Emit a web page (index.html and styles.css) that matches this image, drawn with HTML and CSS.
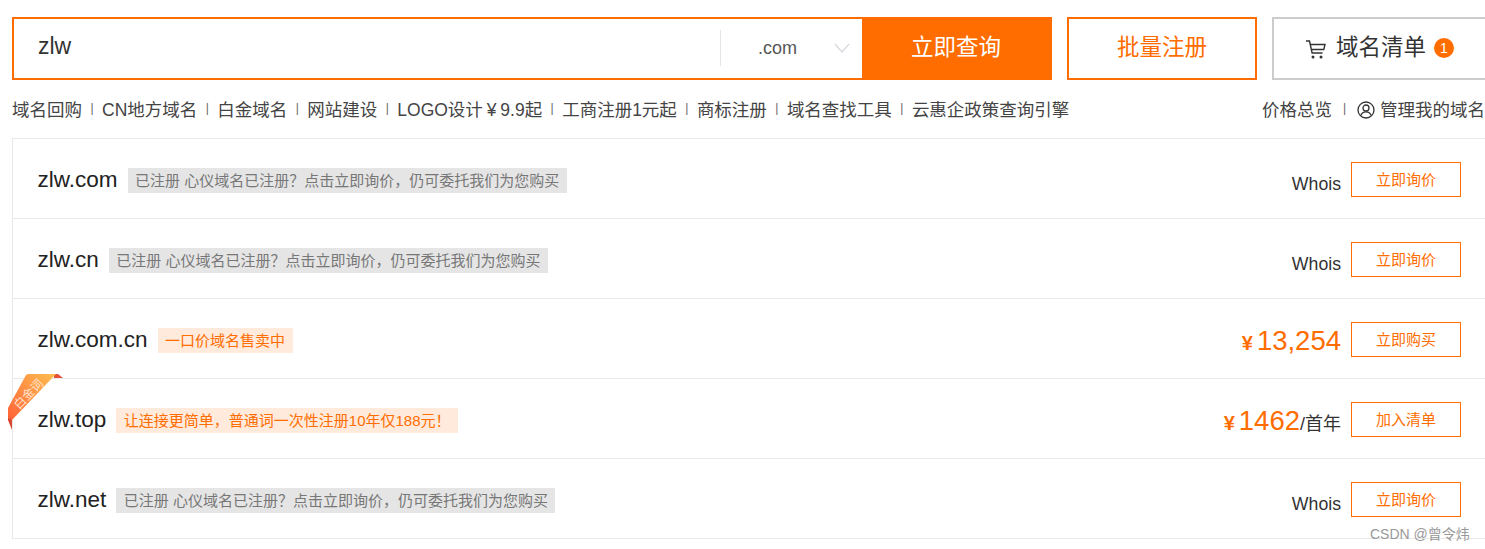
FILE: index.html
```html
<!DOCTYPE html>
<html lang="zh-CN">
<head>
    <meta charset="UTF-8">
    <meta name="viewport" content="width=device-width, initial-scale=1.0">
    <title>域名查询</title>
    <link rel="stylesheet" href="styles.css">
</head>
<body>
    <div class="top-bar">
        <form class="search-box">
            <div class="search-text">zlw</div>
            <div class="suffix">
                <span>.com</span>
                <svg class="suffix-arrow" width="16" height="10" viewBox="0 0 16 10"><path d="M1 1l7 8 7-8" fill="none" stroke="#d5d9de" stroke-width="1.2"/></svg>
            </div>
            <button type="button" class="search-btn">立即查询</button>
        </form>
        <a class="batch-btn">批量注册</a>
        <a class="cart-btn">
            <svg width="22" height="20" viewBox="0 0 22 20"><path d="M1 2h3.500l2.600 12h10.400M5.200 5.500h14.800l-1.200 5H6.300" fill="none" stroke="#333" stroke-width="1.400"/><circle cx="8" cy="18" r="1.500" fill="#333"/><circle cx="16" cy="18" r="1.500" fill="#333"/></svg>
            <span>域名清单</span>
            <i class="cart-count">1</i>
        </a>
    </div>
    <div class="nav">
        <div class="nav-left">
            <a>域名回购</a><i>|</i>
            <a>CN地方域名</a><i>|</i>
            <a>白金域名</a><i>|</i>
            <a>网站建设</a><i>|</i>
            <a class="nav-logo">LOGO设计 ¥ 9.9起</a><i>|</i>
            <a>工商注册1元起</a><i>|</i>
            <a>商标注册</a><i>|</i>
            <a>域名查找工具</a><i>|</i>
            <a>云惠企政策查询引擎</a>
        </div>
        <div class="nav-right">
            <a>价格总览</a><i>|</i>
            <a class="my-domain">
                <svg class="user-icon" width="18" height="18" viewBox="0 0 18 18"><circle cx="9" cy="9" r="8" fill="none" stroke="#333" stroke-width="1.300"/><circle cx="9" cy="7" r="3" fill="none" stroke="#333" stroke-width="1.300"/><path d="M3.800 14.500c1-2.600 2.800-3.600 5.200-3.600s4.200 1 5.200 3.600" fill="none" stroke="#333" stroke-width="1.300"/></svg>
                管理我的域名
            </a>
        </div>
    </div>
    <div class="result-list">
        <div class="row">
            <div class="domain">zlw.com</div>
            <span class="tag">已注册 心仪域名已注册&#xFF1F;点击立即询价&#xFF0C;仍可委托我们为您购买</span>
            <div class="row-right">
                <a class="whois">Whois</a>
                <a class="row-btn">立即询价</a>
            </div>
        </div>
        <div class="row">
            <div class="domain">zlw.cn</div>
            <span class="tag">已注册 心仪域名已注册&#xFF1F;点击立即询价&#xFF0C;仍可委托我们为您购买</span>
            <div class="row-right">
                <a class="whois">Whois</a>
                <a class="row-btn">立即询价</a>
            </div>
        </div>
        <div class="row">
            <div class="domain">zlw.com.cn</div>
            <span class="tag tag-orange">一口价域名售卖中</span>
            <div class="row-right">
                <div class="price"><small>¥</small>13,254</div>
                <a class="row-btn">立即购买</a>
            </div>
        </div>
        <div class="row">
            <svg class="ribbon" width="56" height="58" viewBox="0 0 56 58">
                <defs>
                    <linearGradient id="ribbonFill" x1="1" y1="0" x2="0" y2="1">
                        <stop offset="0" stop-color="#ffbe50"/>
                        <stop offset="1" stop-color="#ff6238"/>
                    </linearGradient>
                </defs>
                <path d="M46 0h4l5 4h-9z" fill="#e8503a"/>
                <path d="M0 34v12l4 10v-10z" fill="#d9452f"/>
                <path d="M18 1q1-1 3-1h27L4 46 0 44v-10z" fill="url(#ribbonFill)"/>
                <text class="ribbon-text" transform="translate(11 36) rotate(-46)">白金词</text>
            </svg>
            <div class="domain">zlw.top</div>
            <span class="tag tag-orange">让连接更简单&#xFF0C;普通词一次性注册10年仅188元&#xFF01;</span>
            <div class="row-right">
                <div class="price"><small>¥</small>1462<span class="per-year">/首年</span></div>
                <a class="row-btn">加入清单</a>
            </div>
        </div>
        <div class="row">
            <div class="domain">zlw.net</div>
            <span class="tag">已注册 心仪域名已注册&#xFF1F;点击立即询价&#xFF0C;仍可委托我们为您购买</span>
            <div class="row-right">
                <a class="whois">Whois</a>
                <a class="row-btn">立即询价</a>
            </div>
        </div>
    </div>
    <div class="watermark">CSDN @曾令炜</div>
</body>
</html>
```

FILE: styles.css
```css
html, body {
    margin: 0;
    height: 549px;
    overflow: hidden;
    background-color: #fff;
}
body {
    padding: 17px 0 0 12px;
    box-sizing: border-box;
    width: 1485px;
    position: relative;
    font-family: "Liberation Sans", "Noto Sans CJK SC", sans-serif;
    color: #333;
}
.top-bar {
    display: flex;
    height: 63px;
}
.search-box {
    display: flex;
    width: 1040px;
    margin: 0;
    flex-shrink: 0;
    border: 2px solid #ff6d00;
    box-sizing: border-box;
}
.search-text {
    flex: 1;
    padding-left: 24px;
    font-size: 23px;
    line-height: 55px;
    color: #333;
}
.suffix {
    display: flex;
    align-items: center;
    width: 142px;
    height: 36px;
    margin-top: 11px;
    box-sizing: border-box;
    padding-left: 37px;
    border-left: 1px solid #e5e5e5;
    font-size: 18px;
    color: #555;
}
.suffix-arrow {
    margin-left: 37px;
}
.search-btn {
    width: 188px;
    border: none;
    padding: 0 0 8px;
    background-color: #ff6d00;
    color: #fff;
    font-family: inherit;
    font-size: 22.500px;
}
.batch-btn, .cart-btn {
    display: flex;
    align-items: center;
    justify-content: center;
    flex-shrink: 0;
    box-sizing: border-box;
    font-size: 22.500px;
}
.batch-btn {
    width: 190px;
    margin-left: 15px;
    padding-bottom: 8px;
    border: 2px solid #ff6d00;
    color: #ff6d00;
}
.cart-btn {
    width: 230px;
    margin-left: 15px;
    padding-left: 31px;
    justify-content: flex-start;
    border: 2px solid #ccc;
}
.cart-btn span {
    margin: 0 0 8px 9px;
}
.cart-count {
    width: 20px;
    height: 20px;
    margin: 0 0 1px 8px;
    border-radius: 50%;
    background-color: #ff6d00;
    color: #fff;
    font-size: 14px;
    font-style: normal;
    line-height: 20px;
    text-align: center;
}
.nav {
    display: flex;
    justify-content: space-between;
    align-items: center;
    height: 58px;
    padding-bottom: 2px;
    box-sizing: border-box;
    font-size: 17.500px;
    color: #444;
}
.nav-left, .nav-right {
    display: flex;
    align-items: center;
}
.nav i {
    width: 20px;
    font-size: 12px;
    font-style: normal;
    text-align: center;
    color: #666;
}
.nav-logo {
    word-spacing: -1px;
}
.nav-right i {
    width: 25px;
}
.my-domain {
    display: flex;
    align-items: center;
    gap: 5px;
}
.user-icon {
    margin-top: 3px;
}
.result-list {
    width: 1473px;
    border-left: 1px solid #e8e8e8;
    border-top: 1px solid #e8e8e8;
    box-sizing: border-box;
}
.row {
    display: flex;
    align-items: center;
    position: relative;
    height: 80px;
    box-sizing: border-box;
    padding: 1px 24px 0 24.500px;
    border-bottom: 1px solid #e8e8e8;
}
.domain {
    margin-top: 2px;
    font-size: 22.500px;
    color: #222;
}
.tag {
    margin: 2px 0 0 10px;
    padding: 0 7.500px;
    height: 25px;
    line-height: 25px;
    font-size: 15px;
    color: #777;
    background-color: #e5e5e5;
}
.tag-orange {
    color: #ff6d00;
    background-color: #ffeadb;
}
.row-right {
    display: flex;
    align-items: center;
    margin-left: auto;
}
.whois {
    margin: 10px 10px 0 0;
    font-size: 17.700px;
    color: #333;
}
.price {
    margin: 3px 10px 0 0;
    font-size: 27.500px;
    white-space: nowrap;
    color: #ff6d00;
}
.price small {
    margin-right: 4px;
    font-size: 20px;
    font-weight: 700;
}
.per-year {
    font-size: 18px;
    color: #333;
}
.row-btn {
    width: 110px;
    height: 35px;
    box-sizing: border-box;
    border: 1px solid #ff6d00;
    color: #ff6d00;
    font-size: 15px;
    line-height: 33px;
    text-align: center;
}
.ribbon {
    position: absolute;
    left: -5px;
    top: -5px;
}
.ribbon-text {
    font-size: 12px;
    fill: #ffe3cf;
}
.watermark {
    position: absolute;
    left: 1370px;
    top: 523px;
    font-size: 14px;
    color: #999;
}
```
